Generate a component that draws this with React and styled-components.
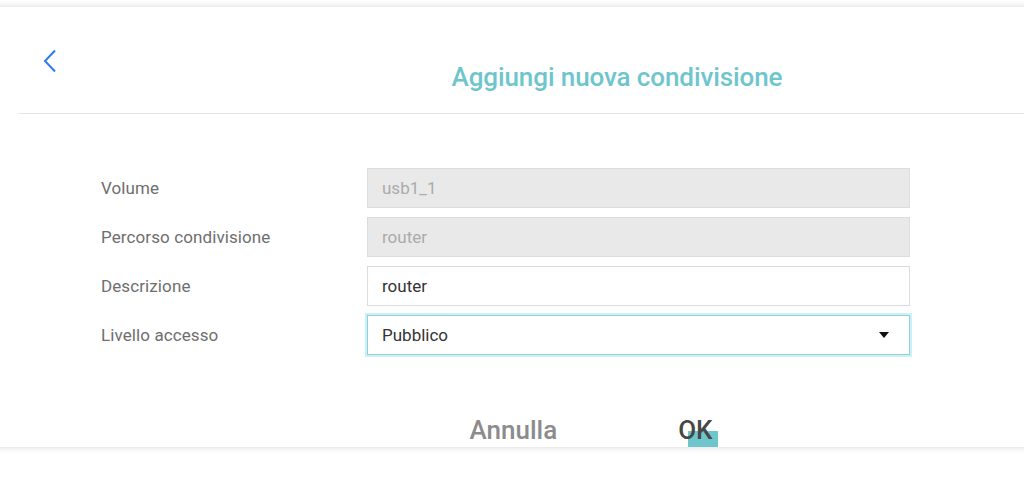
import styled, { createGlobalStyle } from 'styled-components'

const Global = createGlobalStyle`
	html, body {
		margin: 0;
		padding: 0;
		background: #fff;
		font-family: Roboto, 'Liberation Sans', sans-serif;
	}
`

const Page = styled.div`
	padding-top: 7px;
	overflow: hidden;
	height: 488px;
	box-sizing: border-box;
`

const Card = styled.div`
	height: 440px;
	margin: 0 -10px;
	padding: 0 10px;
	background: #fff;
	box-shadow: 0 0 7px rgba(0, 0, 0, 0.16);
	overflow: hidden;
`

const Header = styled.header`
	position: relative;
	height: 106px;
	margin-left: 18px;
	border-bottom: 1.5px solid #e6e6e6;
	display: flex;
	justify-content: center;
`

const Back = styled.button`
	position: absolute;
	left: 24px;
	top: 42px;
	border: 0;
	background: none;
	padding: 0;
	width: 16px;
	height: 24px;
	cursor: pointer;
`

const Title = styled.h1`
	margin: 55px 0 0 192px;
	color: #6ec6cc;
	font-size: 26px;
	font-weight: 500;
	line-height: 30px;
	letter-spacing: -0.1px;
`

const Form = styled.div`
	padding: 54px 0 0 101px;
	display: flex;
	flex-direction: column;
	gap: 9px;
`

const Row = styled.div`
	display: grid;
	grid-template-columns: 266px 543px;
	align-items: center;
	height: 40px;
`

const Label = styled.label`
	font-size: 17px;
	color: #6e6e6e;
	letter-spacing: 0.1px;
`

const Field = styled.div`
	height: 40px;
	box-sizing: border-box;
	display: flex;
	align-items: center;
	justify-content: space-between;
	padding: 0 20px 0 14px;
	font-size: 17px;
	border: 1px solid ${p => (p.$focus ? '#8fd2da' : '#dcdcdc')};
	background: ${p => (p.$disabled ? '#e9e9e9' : '#fff')};
	color: ${p => (p.$disabled ? '#ababab' : '#333')};
	box-shadow: ${p => (p.$focus ? '0 0 0 2px #cdeff9' : 'none')};
`

const Caret = styled.span`
	width: 0;
	height: 0;
	border-left: 5px solid transparent;
	border-right: 5px solid transparent;
	border-top: 6px solid #111;
`

const Buttons = styled.div`
	display: flex;
	justify-content: center;
	gap: 121px;
	margin-top: 60px;
	padding-left: 158px;
`

const TextButton = styled.button`
	position: relative;
	border: 0;
	background: none;
	padding: 0;
	font-family: Roboto, 'Liberation Sans', sans-serif;
	font-size: 26px;
	font-weight: 500;
	line-height: 30px;
	color: ${p => (p.$primary ? '#474747' : '#8c8c8c')};
	cursor: pointer;
`

const OkText = styled.span`
	position: relative;
	z-index: 1;
`

const OkMark = styled.span`
	position: absolute;
	left: 10px;
	top: 16px;
	width: 30px;
	height: 24px;
	background: #6ec6cc;
`

export default function App() {
	return (
		<Page>
			<Global />
			<Card>
				<Header>
					<Back aria-label="Indietro">
						<svg width="14" height="24" viewBox="0 0 14 24">
							<path d="M12 1.5 L2 12 L12 22.5" fill="none" stroke="#2a7cf6" strokeWidth="2" />
						</svg>
					</Back>
					<Title>Aggiungi nuova condivisione</Title>
				</Header>
				<Form>
					<Row>
						<Label>Volume</Label>
						<Field $disabled>usb1_1</Field>
					</Row>
					<Row>
						<Label>Percorso condivisione</Label>
						<Field $disabled>router</Field>
					</Row>
					<Row>
						<Label>Descrizione</Label>
						<Field>router</Field>
					</Row>
					<Row>
						<Label>Livello accesso</Label>
						<Field $focus>
							Pubblico
							<Caret />
						</Field>
					</Row>
				</Form>
				<Buttons>
					<TextButton>Annulla</TextButton>
					<TextButton $primary>
						<OkMark />
						<OkText>OK</OkText>
					</TextButton>
				</Buttons>
			</Card>
		</Page>
	)
}
